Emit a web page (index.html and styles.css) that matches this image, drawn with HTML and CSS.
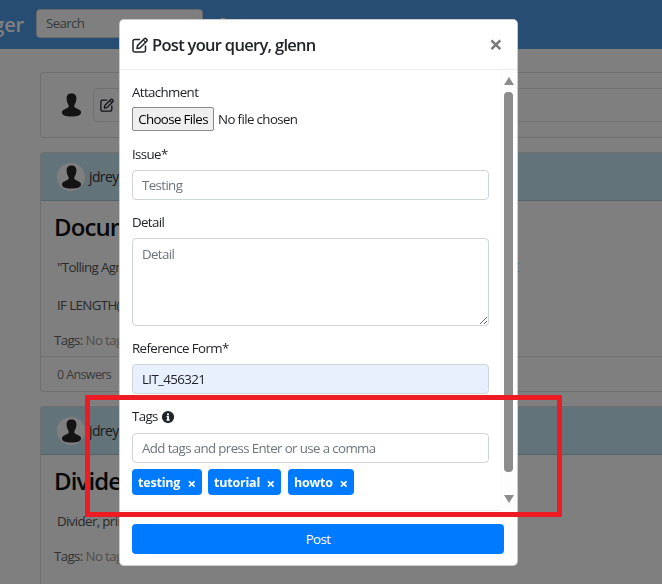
FILE: index.html
```html
<!DOCTYPE html>
<html lang="en">
<head>
<meta charset="utf-8">
<title>Post your query</title>
<link rel="stylesheet" href="styles.css">
</head>
<body>
<div class="page">
  <header class="navbar">
    <span class="brand">Ledger</span>
    <input class="search" type="text" placeholder="Search">
    <span class="nav-icon"></span>
  </header>
  <main class="feed">
    <section class="card composer">
      <svg class="silhouette" viewBox="0 0 24 30"><use href="#person"/></svg>
      <div class="fake-input">
        <svg class="edit-sm" viewBox="0 0 16 16"><use href="#edit"/></svg>
        <span>Post</span>
      </div>
    </section>
    <section class="card">
      <div class="card-head">
        <span class="avatar"><svg viewBox="0 0 24 30"><use href="#person"/></svg></span>
        <span class="user">jdreyes</span>
      </div>
      <div class="card-body">
        <h2>Document</h2>
        <p class="line">"Tolling Agreement"<span class="tail">E</span></p>
        <p class="line">IF LENGTH(</p>
        <p class="tags-line"><b>Tags:</b> No tags</p>
      </div>
      <div class="card-foot"><span>0 Answers</span><span>0 Comments</span></div>
    </section>
    <section class="card">
      <div class="card-head">
        <span class="avatar"><svg viewBox="0 0 24 30"><use href="#person"/></svg></span>
        <span class="user">jdreyes</span>
      </div>
      <div class="card-body">
        <h2>Divider</h2>
        <p class="line">Divider, print</p>
        <p class="tags-line"><b>Tags:</b> No tags</p>
      </div>
      <div class="card-foot"></div>
    </section>
  </main>
</div>

<div class="backdrop"></div>

<div class="modal">
  <div class="modal-head">
    <svg class="edit-lg" viewBox="0 0 16 16"><use href="#edit"/></svg>
    <h1>Post your query, glenn</h1>
    <span class="close">×</span>
  </div>
  <form class="modal-body">
    <label class="lbl">Attachment</label>
    <input class="file" type="file" multiple>
    <label class="lbl lbl-next">Issue*</label>
    <input class="ctl" type="text" placeholder="Testing">
    <label class="lbl lbl-next">Detail</label>
    <textarea class="ctl area" placeholder="Detail"></textarea>
    <label class="lbl lbl-next">Reference Form*</label>
    <input class="ctl filled" type="text" value="LIT_456321">
    <label class="lbl lbl-next lbl-tags">Tags
      <svg class="info" viewBox="0 0 16 16"><circle cx="8" cy="8" r="7" fill="#212529"/><rect x="7" y="7" width="2.200" height="5" fill="#fff"/><rect x="6.200" y="10.800" width="3.800" height="1.300" fill="#fff"/><rect x="6.200" y="7" width="2" height="1.200" fill="#fff"/><circle cx="8" cy="5" r="1.250" fill="#fff"/></svg>
    </label>
    <input class="ctl" type="text" placeholder="Add tags and press Enter or use a comma">
    <div class="chips">
      <span class="chip chip-a">testing <i>×</i></span>
      <span class="chip chip-b">tutorial <i>×</i></span>
      <span class="chip chip-c">howto <i>×</i></span>
    </div>
  </form>
  <div class="scrollbar">
    <span class="arrow up"></span>
    <span class="thumb"></span>
    <span class="arrow down"></span>
  </div>
  <div class="modal-foot">
    <button class="post" type="button">Post</button>
  </div>
</div>

<div class="callout"></div>

<svg class="defs" width="0" height="0">
  <defs>
    <symbol id="person" viewBox="0 0 24 30">
      <path fill="#262626" d="M12 0c4 0 6.200 2.700 6.200 6.500 0 2.900-.8 5.600-2 7.400-.9 1.400-1 3.300.2 4.200 1.800 1.300 5.400 2.200 7 4.100.5.600.6 1.500.6 2.500 0 1.200-1.200 2.800-3 3.500-1.900.8-5.500 1.300-9 1.300s-7.100-.5-9-1.300C1.200 27.500 0 25.900 0 24.700c0-1 .1-1.900.6-2.500 1.600-1.900 5.200-2.800 7-4.100 1.200-.9 1.100-2.800.2-4.200-1.200-1.800-2-4.500-2-7.400C5.800 2.700 8 0 12 0z"/>
    </symbol>
    <symbol id="edit" viewBox="0 0 16 16">
      <path fill="none" stroke="#212529" stroke-width="1.500" stroke-linecap="round" stroke-linejoin="round" d="M7.500 2.500H2.800A1.800 1.800 0 0 0 1 4.300v8.900A1.800 1.800 0 0 0 2.800 15h8.900a1.800 1.800 0 0 0 1.800-1.800V9"/>
      <path fill="none" stroke="#212529" stroke-width="1.500" stroke-linejoin="round" d="M5.500 8.600 12.300 1.800a1.300 1.300 0 0 1 1.800 0l.6.6a1.300 1.300 0 0 1 0 1.800L7.900 11l-2.900.5z"/>
      <path fill="none" stroke="#212529" stroke-width="1.200" d="M11.200 2.900l2.400 2.400"/>
    </symbol>
  </defs>
</svg>
</body>
</html>
```

FILE: styles.css
```css
* { box-sizing: border-box; }
html, body { margin: 0; height: 584px; overflow: hidden; background: #fff; }
body { font-family: "Open Sans", "Noto Sans", sans-serif; font-size: 13.300px; letter-spacing: -0.62px; color: #212529; }
.defs { position: absolute; }

.page { width: 662px; height: 584px; overflow: hidden; }
.navbar { height: 49px; background: #509ae6; display: flex; align-items: center; gap: 13px; padding-right: 10px; }
.brand { margin-left: -41px; width: 64px; text-align: right; font-size: 20px; font-weight: 600; letter-spacing: -0.2px; color: #fff; white-space: nowrap; }
.search { width: 167px; height: 29px; margin-top: -3px; padding: 0 9px; border: 1px solid #ced4da; border-radius: 4px; font: inherit; letter-spacing: inherit; background: #fff; }
.search::placeholder { color: #6c757d; }
.nav-icon { width: 10px; height: 10px; border-radius: 50%; background: #fff; margin: -4px 0 0 2px; }

.feed { padding: 23px 0 0 40px; display: flex; flex-direction: column; gap: 14px; width: 720px; }
.card { border: 1px solid rgba(0,0,0,.125); border-radius: 4px; background: #fff; width: 680px; flex: none; }
.composer { height: 66px; display: flex; align-items: center; padding-left: 21px; gap: 12px; }
.silhouette { width: 19px; height: 24px; margin-top: -1px; }
.fake-input { flex: 1; height: 34px; border: 1px solid #dee2e6; border-radius: 4px; display: flex; align-items: center; gap: 4px; padding-left: 6px; }
.edit-sm { width: 14px; height: 14px; }
.card-head { height: 48px; background: #c4e6f4; border-bottom: 1px solid rgba(0,0,0,.125); display: flex; align-items: center; padding-left: 16px; gap: 4px; }
.avatar { width: 28px; height: 28px; border-radius: 50%; background: #fff; display: flex; align-items: center; justify-content: center; overflow: hidden; }
.avatar svg { width: 19px; height: 24px; }
.user { font-size: 14px; color: #333; }
.card-body { padding: 11px 13px 0; height: 155px; }
.card-body h2 { margin: 0 0 16px; font-size: 24px; line-height: 30px; font-weight: 600; letter-spacing: -0.9px; color: #111; }
.line { margin: 0 0 19px 3px; line-height: 19px; display: flex; color: #555; }
.tail { margin-left: 343px; }
.tags-line { margin: -3px 0 0; line-height: 19px; color: #9e9e9e; }
.tags-line b { font-weight: 400; color: #666; }
.card-foot { height: 35px; border-top: 1px solid rgba(0,0,0,.125); padding: 9px 16px; font-size: 12.500px; color: #777; display: flex; gap: 8px; }

.backdrop { position: fixed; inset: 0; background: rgba(0,0,0,.5); }

.modal { position: absolute; left: 119px; top: 19px; width: 399px; height: 547px; background: #fff; border: 1px solid rgba(0,0,0,.2); border-radius: 5px; display: flex; flex-direction: column; overflow: hidden; }
.modal-head { height: 50px; flex: none; border-bottom: 1px solid #eee; display: flex; align-items: center; padding: 0 12px; gap: 4px; }
.edit-lg { width: 16px; height: 16px; }
.modal-head h1 { margin: 0; flex: 1; font-size: 16.500px; letter-spacing: -0.7px; font-weight: 600; line-height: 24px; }
.close { font-size: 24px; font-weight: 700; line-height: 1; color: #7a7a7a; margin-right: 3px; margin-top: -2px; }

.modal-body { flex: 1; min-height: 0; padding: 13px 28px 0 12px; display: flex; flex-direction: column; overflow: hidden; }
.lbl { line-height: 19px; margin-bottom: 6px; color: #212529; display: flex; align-items: center; gap: 3px; }
.lbl-next { margin-top: 13px; }
.lbl-tags { margin-bottom: 7px; }
.file { font: inherit; letter-spacing: inherit; height: 24px; margin-top: -1px; margin-bottom: 1px; }
.file::file-selector-button { font: inherit; letter-spacing: inherit; height: 24px; width: 82px; padding: 0; margin-right: 4px; background: #efefef; border: 1px solid #8a8a8a; border-radius: 2px; }
.ctl { display: block; flex: none; width: 357px; height: 30px; padding: 0 9px; border: 1px solid #ced4da; border-radius: 4px; font: inherit; letter-spacing: inherit; color: #212529; background: #fff; outline: none; }
.ctl::placeholder { color: #6c757d; }
.area { height: 88px; padding: 6px 9px; resize: vertical; }
.filled { background: #e8f0fe; }
.info { width: 14px; height: 14px; }
.chips { display: flex; margin-top: 6px; }
.chip { display: flex; align-items: center; justify-content: space-between; height: 26px; padding: 1px 6px 0; background: #007bff; color: #fff; border-radius: 4px; font-size: 12.500px; letter-spacing: -0.2px; font-weight: 700; white-space: nowrap; }
.chip-a { width: 70px; margin-right: 6px; }
.chip-b { width: 73px; margin-right: 7px; }
.chip-c { width: 66px; }
.chip i { font-style: normal; font-size: 15px; font-weight: 700; }

.scrollbar { position: absolute; right: 0; top: 50px; height: 441px; width: 17px; background: #fdfdfd; display: flex; flex-direction: column; align-items: center; padding-top: 7px; }
.arrow { width: 0; height: 0; border-left: 5.500px solid transparent; border-right: 5.500px solid transparent; }
.up { border-bottom: 8px solid #8c8c8c; }
.down { border-top: 8px solid #8c8c8c; margin-top: 23px; }
.thumb { width: 9px; height: 380px; margin-top: 7px; background: #8c8c8c; border-radius: 4px; }

.modal-foot { height: 55px; flex: none; border-top: 1px solid #eee; padding: 13px 13px 0 12px; }
.post { display: block; width: 372px; height: 30px; background: #007bff; color: #fff; border: 0; border-radius: 4px; font: inherit; letter-spacing: inherit; }

.callout { position: absolute; left: 85px; top: 395px; width: 477px; height: 122px; border: 5px solid #ed1c24; }
```
